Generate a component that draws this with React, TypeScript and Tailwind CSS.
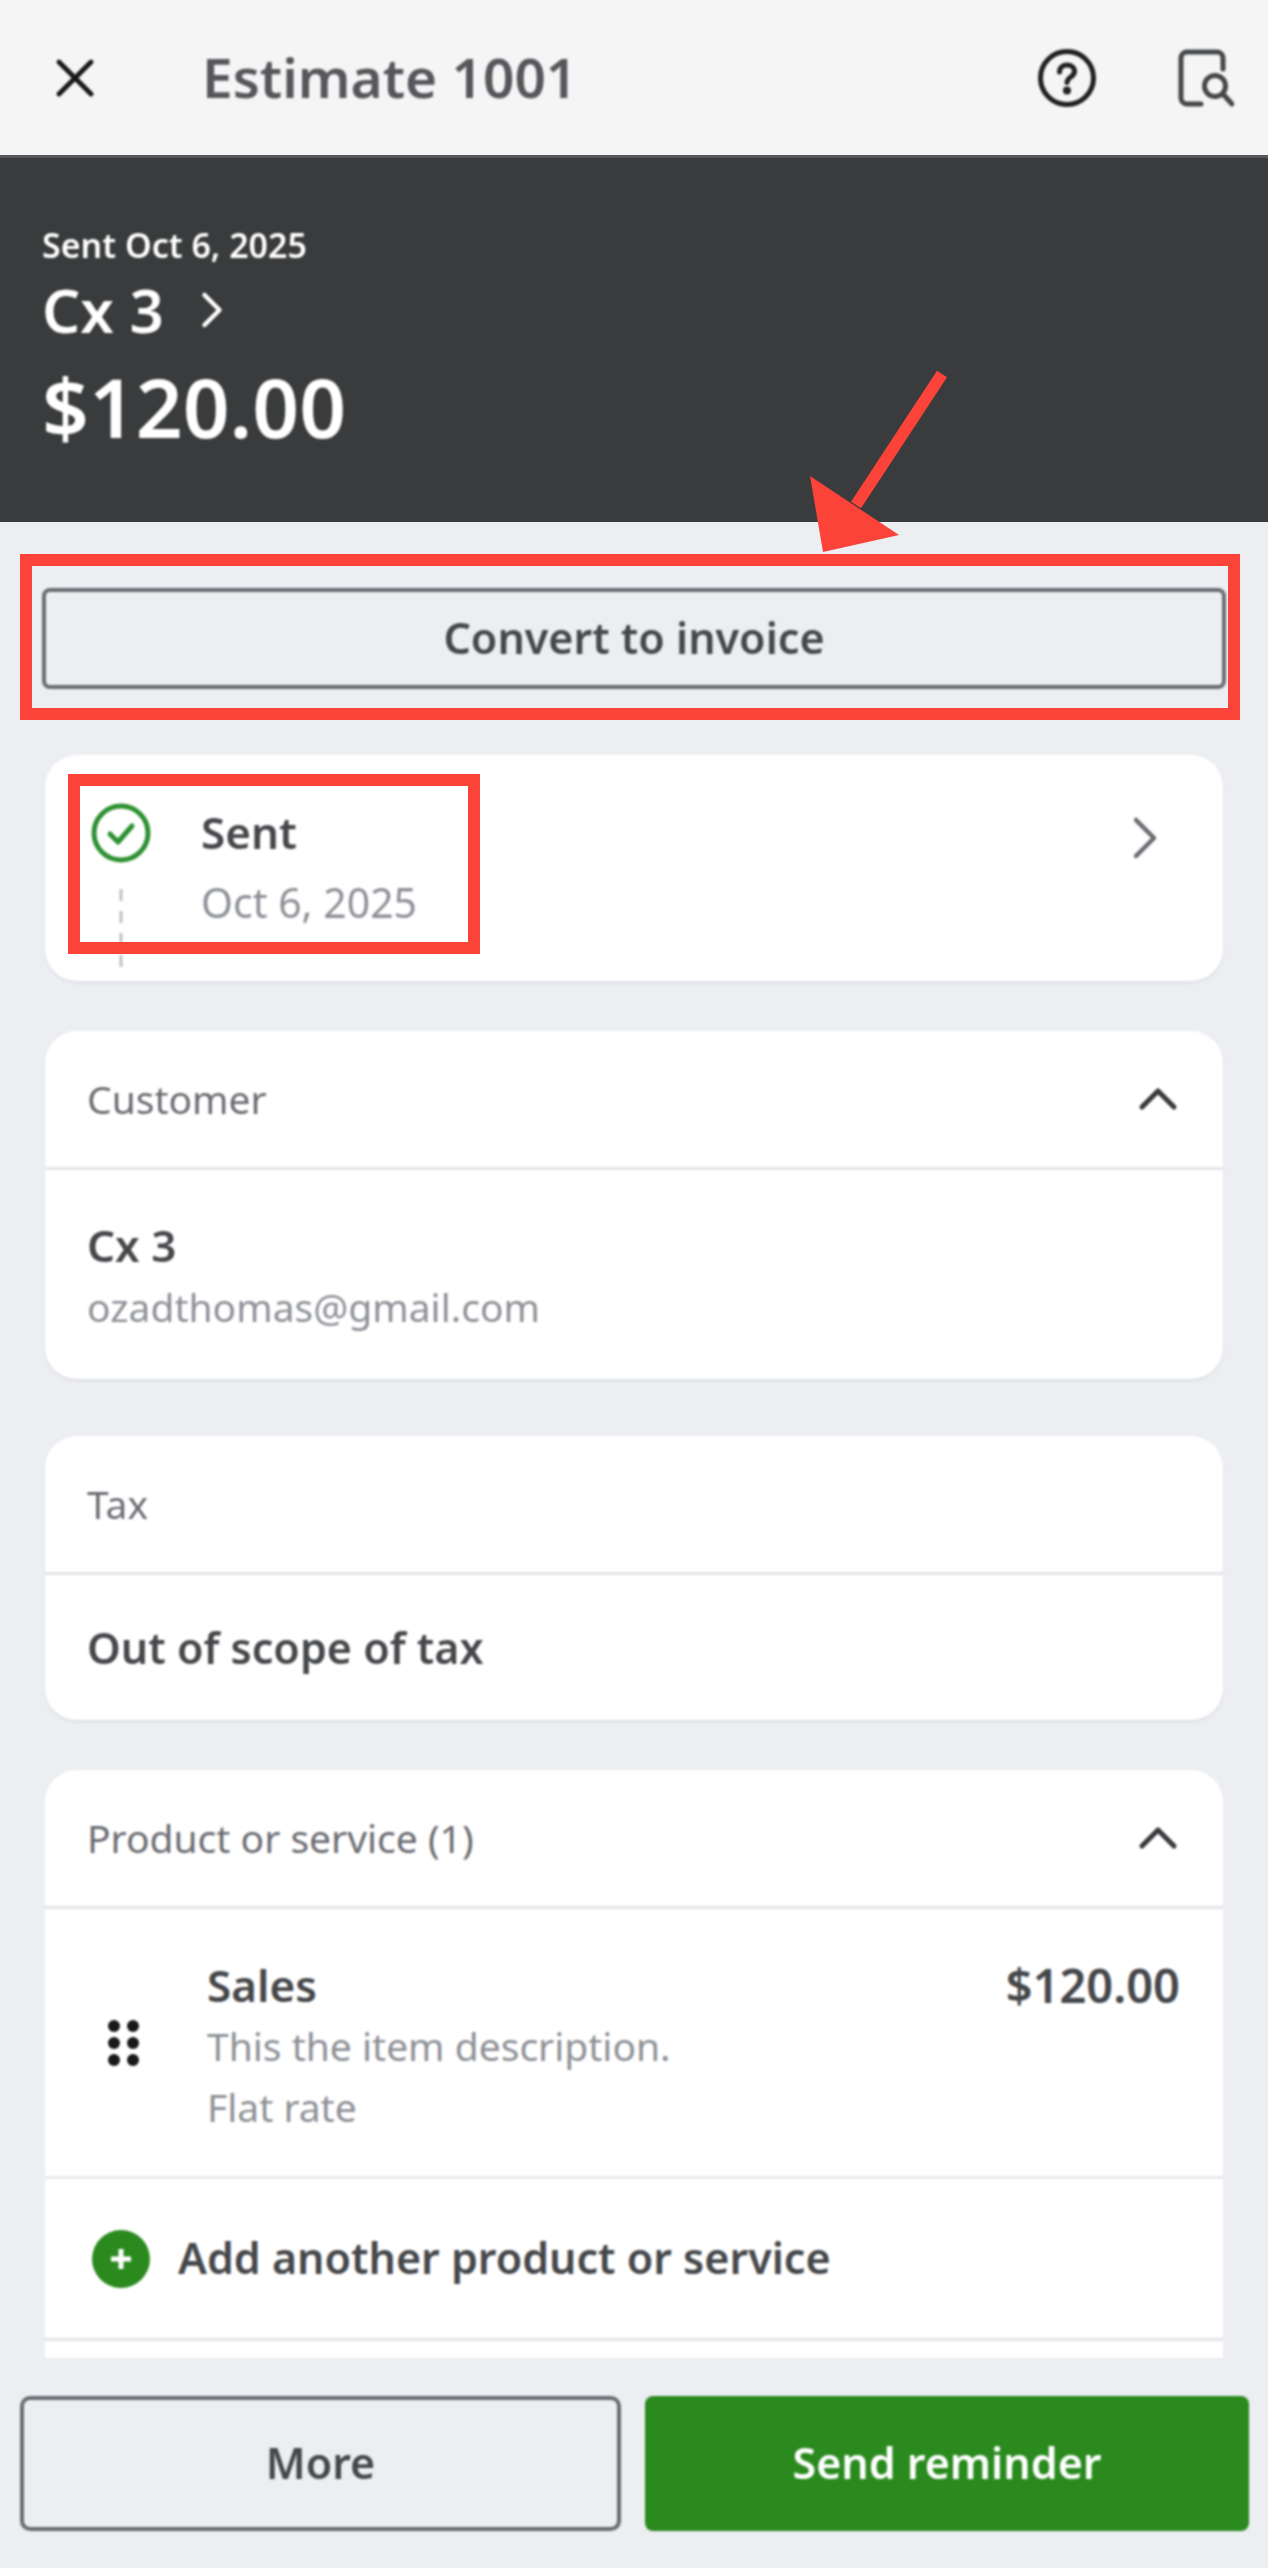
import { ChevronRight, ChevronUp, X } from "lucide-react";

function CardHeader({ title, chevron }: { title: string; chevron?: boolean }) {
  return (
    <div className="flex h-[139px] items-center justify-between border-b-[3px] border-[#e3e5e8] pl-[42px] pr-[33px]">
      <span className="text-[39px] text-[#6b6c72]">{title}</span>
      {chevron && <ChevronUp size={64} strokeWidth={1.9} className="text-[#393a3d]" />}
    </div>
  );
}

function DragDots() {
  return (
    <div className="grid w-[31px] grid-cols-2 gap-x-[7px] gap-y-[5px]">
      {[0, 1, 2, 3, 4, 5].map((dot) => (
        <span key={dot} className="h-[12px] w-[12px] rounded-full bg-[#17181a]" />
      ))}
    </div>
  );
}

function Annotations() {
  return (
    <>
      <div className="absolute left-[20px] top-[554px] h-[166px] w-[1220px] border-[12px] border-[#fb4339]" />
      <div className="absolute left-[68px] top-[774px] h-[180px] w-[412px] border-[12px] border-[#fb4339]" />
      <svg className="absolute left-[800px] top-[365px]" width="150" height="195" viewBox="800 365 150 195">
        <line x1="942" y1="374" x2="856" y2="505" stroke="#fb4339" strokeWidth="12" />
        <polygon points="810,476 823,552 899,535" fill="#fb4339" />
      </svg>
    </>
  );
}

export default function App() {
  return (
    <div className="relative flex h-[2568px] w-[1268px] flex-col overflow-hidden bg-[#eceef2] font-['Noto_Sans','Open_Sans',sans-serif] text-[#45474a]">
      <header className="h-[158px] shrink-0 border-b-[3px] border-[#55575b] bg-[#f5f5f5]">
        <div className="flex h-full items-center pl-[43px] pr-[34px] blur-[1px]">
          <X size={64} strokeWidth={1.8} className="text-[#17181a]" />
          <h1 className="ml-[95px] flex-1 text-[55px] font-semibold text-[#55575b]">Estimate 1001</h1>
          <svg width="60" height="60" viewBox="0 0 60 60" fill="none" stroke="#1f2022" strokeWidth="5" strokeLinecap="round">
            <circle cx="30" cy="30" r="26.5" />
            <path d="M22.5 24c0-4.500 3.400-7 7.500-7s7.500 2.600 7.500 6.500c0 5.500-7.500 5.500-7.500 11" fill="none" />
            <circle cx="30" cy="42.500" r="1.500" fill="#1f2022" />
          </svg>
          <svg className="ml-[81px]" width="56" height="58" viewBox="0 0 56 58" fill="none" stroke="#45474a" strokeWidth="5" strokeLinecap="round">
            <path d="M23 55H9a6 6 0 0 1-6-6V9a6 6 0 0 1 6-6h30a6 6 0 0 1 6 6v11" />
            <circle cx="37" cy="37" r="10.500" />
            <path d="M45 45l9 10" />
          </svg>
        </div>
      </header>

      <section className="h-[364px] shrink-0 bg-[#393b3c] text-white">
        <div className="pl-[42px] pt-[65px] blur-[1px]">
          <p className="text-[34px] font-semibold leading-[44px]">Sent Oct 6, 2025</p>
          <div className="mt-[11px] flex h-[64px] items-center">
            <span className="text-[60px] font-semibold">Cx 3</span>
            <ChevronRight size={60} strokeWidth={1.8} className="ml-[18px]" />
          </div>
          <p className="mt-[14px] text-[82px] font-semibold leading-[100px]">$120.00</p>
        </div>
      </section>

      <main className="flex h-[1836px] shrink-0 flex-col overflow-hidden px-[45px] blur-[1px]">
        <button className="mx-[-3px] mt-[66px] flex h-[101px] shrink-0 items-center justify-center rounded-[8px] border-[4px] border-[#6b6c72] text-[43px] font-semibold">
          Convert to invoice
        </button>

        <div className="relative mt-[66px] flex h-[226px] shrink-0 items-start rounded-[32px] bg-white pl-[156px] pr-[42px] shadow-[0_2px_3px_#dcdee2]">
          <div className="pt-[53px]">
            <p className="text-[44px] font-semibold leading-[48px]">Sent</p>
            <p className="mt-[22px] text-[41px] leading-[48px] text-[#8d9096]">Oct 6, 2025</p>
          </div>
          <ChevronRight size={72} strokeWidth={1.5} className="ml-auto mt-[47px] text-[#6b6c72]" />
          <svg className="absolute left-[46px] top-[48px]" width="60" height="170" viewBox="0 0 60 170" fill="none">
            <circle cx="30" cy="30" r="27" stroke="#2e9132" strokeWidth="5" />
            <path d="M19 31l8 8 14-16" stroke="#2e9132" strokeWidth="5" strokeLinecap="round" strokeLinejoin="round" />
            <path d="M30 86v80" stroke="#bfc1c5" strokeWidth="3" strokeDasharray="12 10" />
          </svg>
        </div>

        <div className="mt-[50px] h-[348px] shrink-0 overflow-hidden rounded-[32px] bg-white shadow-[0_2px_3px_#dcdee2]">
          <CardHeader title="Customer" chevron />
          <div className="pl-[42px] pt-[48px]">
            <p className="text-[44px] font-semibold leading-[54px]">Cx 3</p>
            <p className="mt-[12px] text-[39px] leading-[46px] text-[#8d9096]">ozadthomas@gmail.com</p>
          </div>
        </div>

        <div className="mt-[57px] h-[284px] shrink-0 overflow-hidden rounded-[32px] bg-white shadow-[0_2px_3px_#dcdee2]">
          <CardHeader title="Tax" />
          <p className="pl-[42px] pt-[45px] text-[43px] font-semibold leading-[56px]">Out of scope of tax</p>
        </div>

        <div className="mt-[50px] shrink-0 rounded-t-[32px] bg-white">
          <CardHeader title="Product or service (1)" chevron />
          <div className="flex h-[270px] border-b-[3px] border-[#e9eaec] pl-[63px] pr-[43px]">
            <div className="mt-[111px]">
              <DragDots />
            </div>
            <div className="ml-[68px] flex-1 pt-[50px]">
              <div className="flex justify-between font-semibold leading-[52px]">
                <span className="text-[44px]">Sales</span>
                <span className="text-[47px]">$120.00</span>
              </div>
              <p className="mt-[10px] text-[39px] leading-[50px] text-[#8d9096]">This the item description.</p>
              <p className="mt-[11px] text-[39px] leading-[50px] text-[#8d9096]">Flat rate</p>
            </div>
          </div>
          <div className="flex h-[162px] items-center border-b-[3px] border-[#e3e5e8] pl-[47px]">
            <svg width="58" height="58" viewBox="0 0 58 58">
              <circle cx="29" cy="29" r="29" fill="#2a8a1e" />
              <path d="M29 19v20M19 29h20" stroke="#fff" strokeWidth="5" />
            </svg>
            <span className="ml-[28px] text-[43px] font-semibold">Add another product or service</span>
          </div>
          <div className="h-[40px]" />
        </div>
      </main>

      <footer className="flex flex-1 gap-[24px] pl-[20px] pr-[19px] pt-[38px] blur-[1px]">
        <button className="flex h-[135px] w-[601px] items-center justify-center rounded-[10px] border-[4px] border-[#6b6c72] text-[43px] font-semibold">
          More
        </button>
        <button className="flex h-[135px] flex-1 items-center justify-center rounded-[8px] bg-[#2a8a1e] text-[43px] font-semibold text-white">
          Send reminder
        </button>
      </footer>

      <Annotations />
    </div>
  );
}
